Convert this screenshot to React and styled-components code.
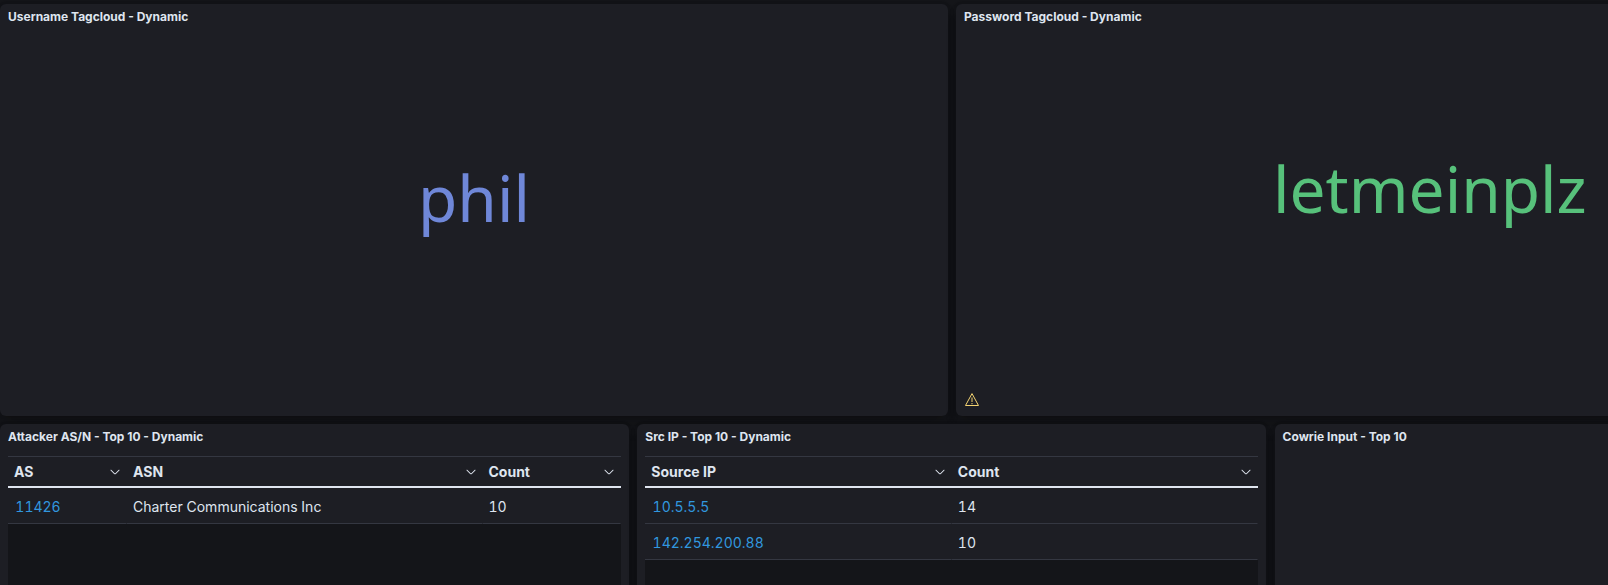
import React from "react";
import styled, { createGlobalStyle } from "styled-components";

const GlobalStyle = createGlobalStyle`
  * { box-sizing: border-box; }
  html, body { margin: 0; background: #141519; overflow: hidden; }
  body {
    font-family: Inter, "Liberation Sans", sans-serif;
    color: #dfe5ef;
  }
`;

const Dashboard = styled.main`
  display: flex;
  flex-direction: column;
  gap: 8px;
  width: 1608px;
  height: 585px;
  padding-top: 4px;
  overflow: hidden;
`;

const PanelRow = styled.div`
  display: flex;
  flex: none;
  gap: ${({ $gap }) => $gap || 8}px;
  height: ${({ $height }) => $height}px;
`;

const PanelFrame = styled.section`
  display: flex;
  flex-direction: column;
  flex: none;
  width: ${({ $width }) => $width}px;
  background: #1d1e24;
  border-radius: 6px;
  box-shadow: 0 0.9px 4px -1px rgba(0, 0, 0, 0.14), 0 2.6px 8px -1px rgba(0, 0, 0, 0.1),
    0 5.7px 12px -1px rgba(0, 0, 0, 0.08), 0 15px 15px -1px rgba(0, 0, 0, 0.06);
`;

const PanelTitle = styled.h2`
  flex: none;
  margin: 0;
  padding: 1px 8px 0;
  height: 24px;
  font-size: 12px;
  line-height: 24px;
  font-weight: 700;
  white-space: nowrap;
`;

const Cloud = styled.div`
  display: flex;
  flex: 1;
  align-items: center;
  justify-content: center;
  padding-bottom: ${({ $lift }) => $lift}px;
`;

const Tag = styled.span`
  font-family: "Noto Sans", sans-serif;
  font-size: 64px;
  line-height: 88px;
  color: ${({ $color }) => $color};
  will-change: transform;
`;

const CloudFooter = styled.footer`
  flex: none;
  height: 24px;
  padding: 0 8px;
`;

const Table = styled.div`
  display: flex;
  flex: 1;
  flex-direction: column;
  margin: 8px 8px 0;
  background: #141519;
`;

const TableRow = styled.div`
  display: grid;
  flex: none;
  grid-template-columns: ${({ $columns }) => $columns};
  height: 36px;
  background: #1d1e24;
`;

const HeaderRow = styled(TableRow)`
  height: 32px;
  border-top: 1px solid #343741;
  border-bottom: 2px solid #dfe5ef;
`;

const HeaderCell = styled.div`
  display: flex;
  align-items: center;
  justify-content: space-between;
  padding: 0 6px;
  font-size: 14px;
  line-height: 20px;
  font-weight: 700;
`;

const Cell = styled.div`
  padding: 2px 6px 0 ${({ $link }) => ($link ? 7.3 : 6)}px;
  border-bottom: 1px solid #343741;
  border-right: 1px solid transparent;
  font-size: 14px;
  line-height: 33px;
  font-feature-settings: "calt" 1, "kern" 1, "liga" 1, "tnum" 1;
  white-space: nowrap;
  color: ${({ $link }) => ($link ? "#3197df" : "#dfe5ef")};
`;

const Chevron = () => (
  <svg width="16" height="16" viewBox="0 0 16 16" fill="#dfe5ef" aria-hidden="true">
    <path
      fillRule="evenodd"
      d="M13.069 5.157 8.384 9.768a.546.546 0 0 1-.768 0L2.93 5.158a.552.552 0 0 0-.771 0 .53.53 0 0 0 0 .759l4.684 4.61a1.65 1.65 0 0 0 2.312 0l4.684-4.61a.53.53 0 0 0 0-.76.552.552 0 0 0-.771 0Z"
    />
  </svg>
);

const ChevronSlot = styled.span`
  display: flex;
  svg { width: 12px; height: 12px; }
`;

const WarningIcon = () => (
  <svg width="16" height="16" viewBox="0 0 16 16" fill="none" stroke="#f3d371" aria-label="Warning">
    <path d="M8 1.6 14.5 13.5H1.5Z" strokeLinejoin="round" />
    <path d="M8 5.5v4.5M8 11v1.2" />
  </svg>
);

function Panel({ title, width, children }) {
  return (
    <PanelFrame $width={width}>
      <PanelTitle>{title}</PanelTitle>
      {children}
    </PanelFrame>
  );
}

function DataTable({ columns, headers, rows }) {
  return (
    <Table>
      <HeaderRow $columns={columns}>
        {headers.map((label) => (
          <HeaderCell key={label}>
            {label}
            <ChevronSlot><Chevron /></ChevronSlot>
          </HeaderCell>
        ))}
      </HeaderRow>
      {rows.map((row) => (
        <TableRow key={row[0]} $columns={columns}>
          {row.map((value, i) => (
            <Cell key={i} $link={i === 0}>{value}</Cell>
          ))}
        </TableRow>
      ))}
    </Table>
  );
}

export default function App() {
  return (
    <>
      <GlobalStyle />
      <Dashboard>
        <PanelRow $height={412}>
          <Panel title="Username Tagcloud - Dynamic" width={948}>
            <Cloud $lift={48}><Tag $color="#6f87d8">phil</Tag></Cloud>
          </Panel>
          <Panel title="Password Tagcloud - Dynamic" width={948}>
            <Cloud $lift={42}><Tag $color="#57c17b">letmeinplz</Tag></Cloud>
            <CloudFooter><WarningIcon /></CloudFooter>
          </Panel>
        </PanelRow>
        <PanelRow $height={412} $gap={8.3}>
          <Panel title="Attacker AS/N - Top 10 - Dynamic" width={629}>
            <DataTable
              columns="119px 355.5px 138.5px"
              headers={["AS", "ASN", "Count"]}
              rows={[["11426", "Charter Communications Inc", "10"]]}
            />
          </Panel>
          <Panel title="Src IP - Top 10 - Dynamic" width={629}>
            <DataTable
              columns="306.5px 306.5px"
              headers={["Source IP", "Count"]}
              rows={[["10.5.5.5", "14"], ["142.254.200.88", "10"]]}
            />
          </Panel>
          <Panel title="Cowrie Input - Top 10" width={630} />
        </PanelRow>
      </Dashboard>
    </>
  );
}
